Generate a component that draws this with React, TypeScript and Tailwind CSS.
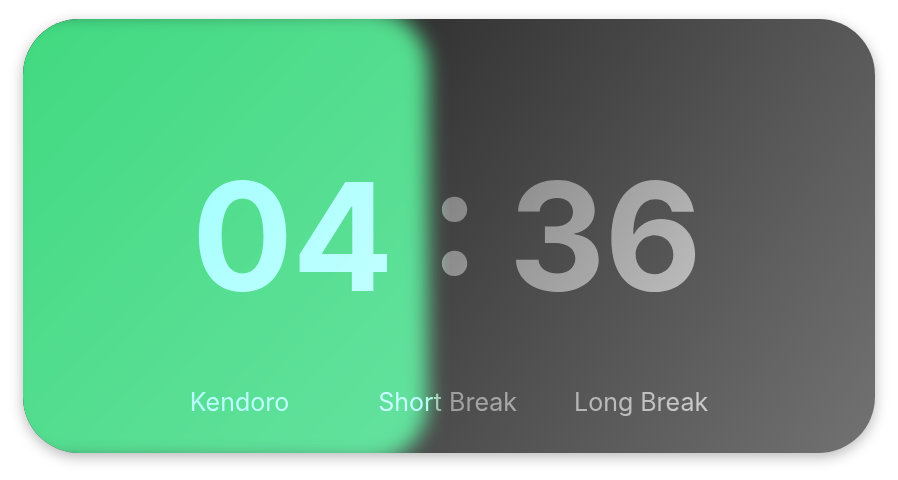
import React from "react";

export default function App() {
  return (
    <div className="w-[898px] h-[480px] bg-white pt-[19px]" style={{ fontFamily: "Inter, 'Noto Sans', sans-serif" }}>
      <div className="relative isolate mx-auto w-[852px] h-[434px] rounded-[56px] overflow-hidden bg-[linear-gradient(125deg,#121212,#727272)] shadow-[0_4px_14px_rgba(0,0,0,0.28)] flex flex-col">
        <div className="absolute -left-[20px] -top-[10px] -bottom-[10px] w-[425px] rounded-[60px] bg-gradient-to-br from-[#3fd97f] to-[#64e29f] blur-[10px]" />
        <div className="relative flex-1 flex items-center justify-center mix-blend-color-dodge text-[#858585]">
          <div className="flex items-center pt-[2px] pr-[5px]">
            <span className="text-[150px] leading-none font-bold tracking-[-1px]">04</span>
            <span className="text-[150px] leading-none font-bold -mt-[32px] ml-[37px] mr-[29px]">:</span>
            <span className="text-[150px] leading-none font-bold tracking-[-1px]">36</span>
          </div>
        </div>
        <div className="absolute left-0 right-0 bottom-[38px] flex justify-center mix-blend-color-dodge text-[#858585] text-[25px] leading-none">
          <span>Kendoro</span>
          <span className="ml-[89px]">Short Break</span>
          <span className="ml-[57px]">Long Break</span>
        </div>
      </div>
    </div>
  );
}
